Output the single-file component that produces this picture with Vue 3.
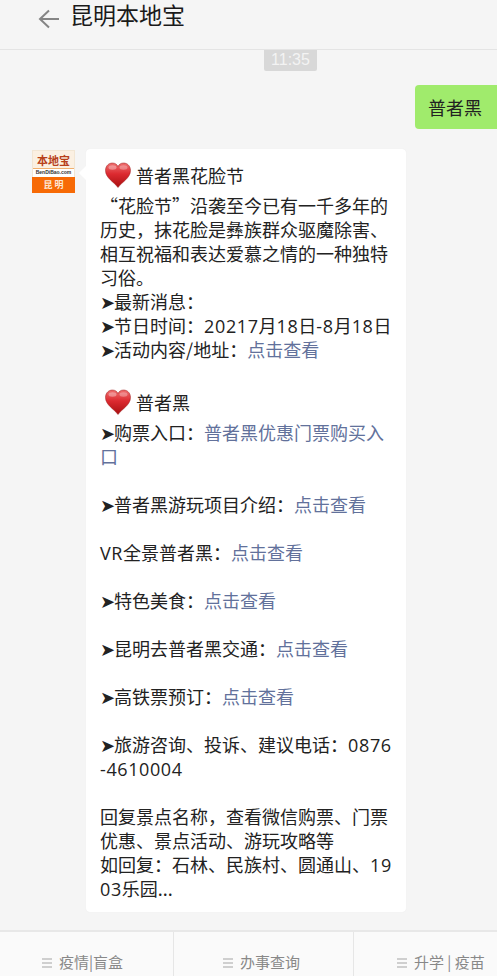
<script setup>
const tabs = [
  { label: '疫情|盲盒', cls: 'tab-a' },
  { label: '办事查询', cls: 'tab-b' },
  { label: '升学 | 疫苗', cls: 'tab-c' },
]
</script>

<template>
  <div class="page">
    <header class="top">
      <svg class="back" width="22" height="20" viewBox="0 0 22 20"><path d="M11 1.500 2 10l9 8.500M2 10h19" fill="none" stroke="#858585" stroke-width="2"/></svg>
      <h1 class="title">昆明本地宝</h1>
    </header>
    <main class="chat">
      <div class="time-row"><span class="time">11:35</span></div>
      <div class="sent-row"><div class="sent">普者黑</div></div>
      <div class="recv-row">
        <div class="avatar">
          <div class="logo-top">
            <span class="logo-name">本地宝</span>
            <span class="logo-url">BenDiBao.com</span>
          </div>
          <div class="logo-city">昆 明</div>
        </div>
        <div class="card">
          <div class="heading first">
            <svg class="heart" viewBox="0 0 26 26"><defs><linearGradient id="hg" x1="0" y1="0" x2="0" y2="1"><stop offset="0" stop-color="#ee7070"/><stop offset=".45" stop-color="#dc2a30"/><stop offset="1" stop-color="#a80f10"/></linearGradient></defs><path d="M13 25.500C9 20 .5 16 .5 8.500.5 3.500 4 1 7.500 1c2.800 0 4.500 1.500 5.500 3.500C14 2.500 15.700 1 18.500 1c3.500 0 7 2.500 7 7.500 0 7.500-8.500 11.500-12.500 17z" fill="url(#hg)" stroke="#9c1a1a" stroke-width=".5"/><ellipse cx="7.500" cy="5.500" rx="4" ry="2.200" fill="#fff" opacity=".35"/><ellipse cx="18.500" cy="5.500" rx="4" ry="2.200" fill="#fff" opacity=".3"/></svg>
            <span>普者黑花脸节</span>
          </div>
          <p class="text lead"> “花脸节”沿袭至今已有一千多年的历史，抹花脸是彝族群众驱魔除害、相互祝福和表达爱慕之情的一种独特习俗。</p>
          <p class="text"><i>➤</i>最新消息：</p>
          <p class="text"><i>➤</i>节日时间：<span class="num">20217</span>月<span class="num">18</span>日<span class="num">-8</span>月<span class="num">18</span>日</p>
          <p class="text"><i>➤</i>活动内容/地址：<a>点击查看</a></p>
          <div class="heading second">
            <svg class="heart" viewBox="0 0 26 26"><path d="M13 25.500C9 20 .5 16 .5 8.500.5 3.500 4 1 7.500 1c2.800 0 4.500 1.500 5.500 3.500C14 2.500 15.700 1 18.500 1c3.500 0 7 2.500 7 7.500 0 7.500-8.500 11.500-12.500 17z" fill="url(#hg)" stroke="#9c1a1a" stroke-width=".5"/><ellipse cx="7.500" cy="5.500" rx="4" ry="2.200" fill="#fff" opacity=".35"/><ellipse cx="18.500" cy="5.500" rx="4" ry="2.200" fill="#fff" opacity=".3"/></svg>
            <span>普者黑</span>
          </div>
          <p class="text gap"><i>➤</i>购票入口：<a>普者黑优惠门票购买入口</a></p>
          <p class="text gap"><i>➤</i>普者黑游玩项目介绍：<a>点击查看</a></p>
          <p class="text gap"><span class="num">VR</span>全景普者黑：<a>点击查看</a></p>
          <p class="text gap"><i>➤</i>特色美食：<a>点击查看</a></p>
          <p class="text gap"><i>➤</i>昆明去普者黑交通：<a>点击查看</a></p>
          <p class="text gap"><i>➤</i>高铁票预订：<a>点击查看</a></p>
          <p class="text gap"><i>➤</i>旅游咨询、投诉、建议电话：<span class="num">0876-4610004</span></p>
          <p class="text">回复景点名称，查看微信购票、门票优惠、景点活动、游玩攻略等</p>
          <p class="text">如回复：石林、民族村、圆通山、<span class="num">1903</span>乐园...</p>
        </div>
      </div>
    </main>
    <footer class="tabs">
      <div v-for="t in tabs" :key="t.label" class="tab" :class="t.cls">
        <span class="burger"><b></b><b></b><b></b></span>
        <span>{{ t.label }}</span>
      </div>
    </footer>
  </div>
</template>

<style>
html, body { margin: 0; background: #f5f5f5; overflow: hidden; }
</style>

<style scoped>
.page { width: 497px; height: 976px; display: flex; flex-direction: column; background: #f5f5f5; overflow: hidden; font-family: "Noto Sans CJK SC", "Liberation Sans", sans-serif; color: #222; }
.top { flex: 0 0 50px; box-sizing: border-box; display: flex; align-items: flex-start; padding-left: 38px; border-bottom: 1px solid #e4e4e4; }
.back { margin-top: 9px; }
.title { margin: 0 0 0 10px; font-size: 23px; line-height: 29px; font-weight: 400; color: #1a1a1a; }
.chat { flex: 1; min-height: 0; display: flex; flex-direction: column; }
.time-row { display: flex; height: 21px; padding-left: 264px; }
.time { width: 53px; height: 21px; background: #d8d8d8; border-radius: 0 0 2px 2px; color: #f3f3f3; font: 16px/20px "Liberation Sans", sans-serif; text-align: center; }
.sent-row { display: flex; justify-content: flex-end; margin-top: 14px; }
.sent { width: 82px; height: 44px; padding-right: 2px; box-sizing: border-box; background: #a0eb6c; border-radius: 4px 0 0 4px; font-size: 18px; line-height: 44px; text-align: center; color: #222; }
.recv-row { display: flex; align-items: flex-start; margin-top: 20px; padding-left: 32px; }
.avatar { width: 43px; height: 43px; margin-top: 1px; display: flex; flex-direction: column; flex: none; }
.logo-top { height: 27px; background: linear-gradient(#fbf0e2 0 17px, #f0b070 17px 18px, #fff 18px); display: flex; flex-direction: column; align-items: center; box-sizing: border-box; border: 1px solid #f2e6d4; border-bottom: 0; }
.logo-name { font-size: 11px; line-height: 12px; font-weight: 700; color: #b8401a; margin-top: 3px; white-space: nowrap; }
.logo-url { font: 700 5px/8px "Liberation Sans", sans-serif; color: #333; margin-top: 2px; white-space: nowrap; }
.logo-city { height: 16px; background: #f76a06; color: #fde6d4; font-size: 9px; font-weight: 700; line-height: 16px; text-align: center; }
.card { position: relative; width: 320px; height: 763px; margin-left: 11px; box-sizing: border-box; padding: 0 11px 0 14px; background: #fff; border-radius: 4px; box-shadow: 0 0 1px #e5e5e5; }
.card::before { content: ""; position: absolute; left: -5px; top: 19px; width: 10px; height: 10px; background: #fff; transform: rotate(45deg); }
.heading { display: flex; align-items: center; font-size: 18px; line-height: 24px; height: 26px; padding-left: 5px; gap: 5px; color: #222; }
.heading.first { margin-top: 13px; }
.heading.second { margin-top: 28px; margin-bottom: 5px; }
.heart { width: 26px; height: 26px; flex: none; }
.text { margin: 0; font-size: 18px; line-height: 24px; color: #222; word-break: break-all; }
.lead { margin-top: 5px; }
.gap { margin-bottom: 24px; }
.text i { font-style: normal; font-family: "DejaVu Sans", sans-serif; font-size: 18px; line-height: 1; color: #222; margin-right: -1px; }
.text a { color: #62719b; }
.num { font-family: "Open Sans", sans-serif; letter-spacing: .6px; line-height: 1; }
.tabs { flex: 0 0 46px; box-sizing: border-box; display: grid; grid-template-columns: 174px 180px 143px; background: #fafafa; border-top: 2px solid #e8e8e8; }
.tab { display: flex; align-items: flex-start; gap: 7px; padding-top: 19px; font-size: 15px; line-height: 21px; color: #888; white-space: nowrap; box-sizing: border-box; border-right: 1px solid #e6e6e6; }
.tab:last-child { border-right: 0; }
.tab-a { padding-left: 42px; }
.tab-b { padding-left: 49px; }
.tab-c { padding-left: 43px; }
.burger { display: flex; flex-direction: column; gap: 2px; width: 10px; margin-top: 7px; flex: none; }
.burger b { height: 2px; background: #cfcfcf; }
</style>
